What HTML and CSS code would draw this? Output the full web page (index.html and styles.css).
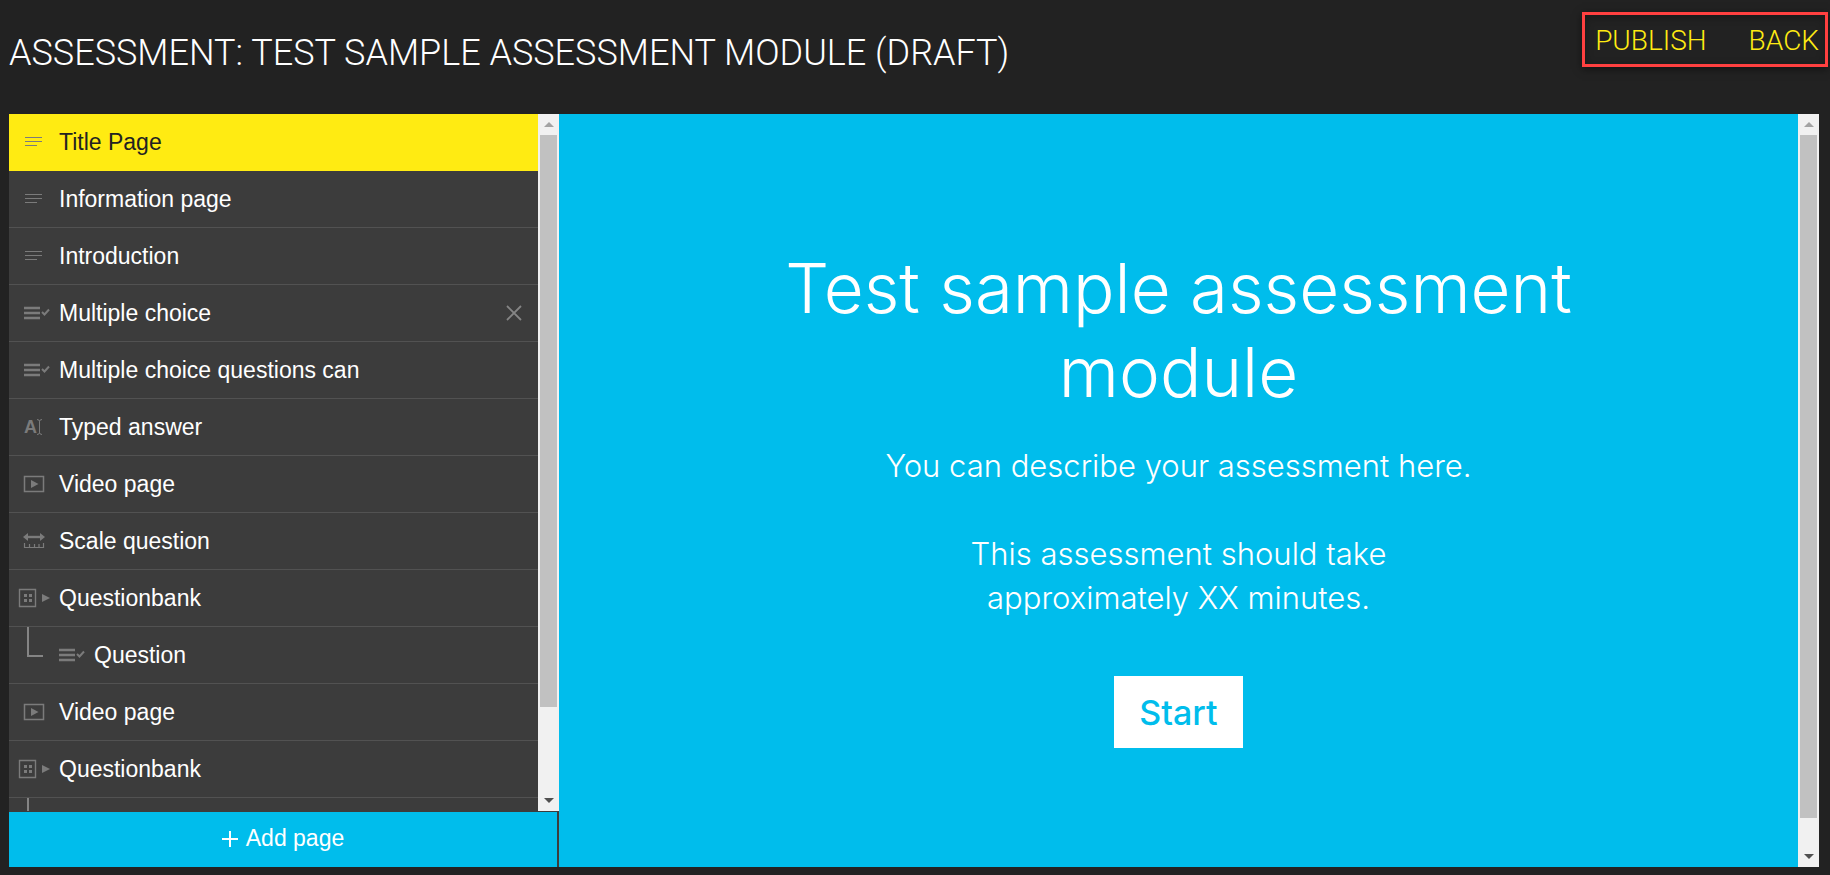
FILE: index.html
```html
<!DOCTYPE html>
<html lang="en">
<head>
    <meta charset="UTF-8">
    <meta name="viewport" content="width=device-width, initial-scale=1.0">
    <title>Assessment: Test sample assessment module</title>
    <link rel="stylesheet" href="styles.css">
</head>
<body>
    <!-- Shared icons -->
    <svg class="icon-defs" aria-hidden="true">
        <symbol id="icon-text" viewBox="0 0 36 24">
            <path d="M9 7.5h17M9 11.5h17M9 15.5h12" stroke="currentColor" stroke-width="1.2" fill="none"/>
        </symbol>
        <symbol id="icon-choice" viewBox="0 0 36 24">
            <path d="M8 7h16M8 12h16M8 17h16" stroke="currentColor" stroke-width="2.5" fill="none"/>
            <path d="M26 11l2.5 2.5 4.5-5" stroke="currentColor" stroke-width="2" fill="none"/>
        </symbol>
        <symbol id="icon-typed" viewBox="0 0 36 24">
            <text x="8" y="18" class="icon-letter">A</text>
            <path d="M21 4.5q2.500 0 2.500 2v11q0 2-2.500 2M26 4.500q-2.500 0-2.500 2v11q0 2 2.500 2" stroke="currentColor" fill="none"/>
        </symbol>
        <symbol id="icon-video" viewBox="0 0 36 24">
            <path d="M8.500 4.500h19v15h-19z" stroke="currentColor" stroke-width="1.500" fill="none"/>
            <path d="M15 8l7.500 4-7.500 4z" fill="currentColor"/>
        </symbol>
        <symbol id="icon-scale" viewBox="0 0 36 24">
            <path d="M11 8h14" stroke="currentColor" stroke-width="2.400" fill="none"/>
            <path d="M7 8l5-4v8zM29 8l-5-4v8z" fill="currentColor"/>
            <path d="M8.500 14v4.500h19V14M13.500 18v-3M18.500 18v-3M23 18v-3" stroke="currentColor" stroke-width="1.200" fill="none"/>
        </symbol>
        <symbol id="icon-bank" viewBox="0 0 36 24">
            <path d="M3.500 3.500h16v17h-16z" stroke="currentColor" stroke-width="1.400" fill="none"/>
            <path d="M8 8h3v3H8zM13 8h3v3h-3zM8 13h3v3H8zM13 13h3v3h-3z" fill="currentColor"/>
            <path d="M26 8l8 4-8 4z" fill="currentColor"/>
        </symbol>
    </svg>

    <header class="header">
        <h1 class="title">ASSESSMENT: TEST SAMPLE ASSESSMENT MODULE (DRAFT)</h1>
        <nav class="actions">
            <a href="#publish">PUBLISH</a>
            <a href="#back">BACK</a>
        </nav>
    </header>

    <main class="editor">
        <aside class="sidebar">
            <div class="list-wrap">
                <ul class="page-list">
                    <li class="page active"><button type="button" class="page-link"><svg class="icon"><use href="#icon-text"/></svg>Title Page</button></li>
                    <li class="page"><button type="button" class="page-link"><svg class="icon"><use href="#icon-text"/></svg>Information page</button></li>
                    <li class="page"><button type="button" class="page-link"><svg class="icon"><use href="#icon-text"/></svg>Introduction</button></li>
                    <li class="page">
                        <button type="button" class="page-link"><svg class="icon"><use href="#icon-choice"/></svg>Multiple choice</button>
                        <button type="button" class="remove" aria-label="Remove page">
                            <svg width="16" height="16" viewBox="0 0 16 16"><path d="M1 1l14 14M15 1L1 15" stroke="currentColor" stroke-width="1.800" fill="none"/></svg>
                        </button>
                    </li>
                    <li class="page"><button type="button" class="page-link"><svg class="icon"><use href="#icon-choice"/></svg>Multiple choice questions can</button></li>
                    <li class="page"><button type="button" class="page-link"><svg class="icon"><use href="#icon-typed"/></svg>Typed answer</button></li>
                    <li class="page"><button type="button" class="page-link"><svg class="icon"><use href="#icon-video"/></svg>Video page</button></li>
                    <li class="page"><button type="button" class="page-link"><svg class="icon"><use href="#icon-scale"/></svg>Scale question</button></li>
                    <li class="page"><button type="button" class="page-link"><svg class="icon"><use href="#icon-bank"/></svg>Questionbank</button></li>
                    <li class="page child"><span class="branch"></span><button type="button" class="page-link"><svg class="icon"><use href="#icon-choice"/></svg>Question</button></li>
                    <li class="page"><button type="button" class="page-link"><svg class="icon"><use href="#icon-video"/></svg>Video page</button></li>
                    <li class="page"><button type="button" class="page-link"><svg class="icon"><use href="#icon-bank"/></svg>Questionbank</button></li>
                    <li class="page child"><span class="branch"></span></li>
                </ul>
                <div class="scrollbar">
                    <span class="arrow up"></span>
                    <div class="track"><div class="thumb thumb-list"></div></div>
                    <span class="arrow down"></span>
                </div>
            </div>
            <button type="button" class="add-page">
                <svg width="16" height="16" viewBox="0 0 16 16"><path d="M8 0v16M0 8h16" stroke="currentColor" stroke-width="2" fill="none"/></svg>
                Add page
            </button>
        </aside>

        <section class="preview">
            <div class="preview-content">
                <h2>Test sample assessment module</h2>
                <p>You can describe your assessment here.</p>
                <p>This assessment should take approximately XX minutes.</p>
                <button type="button" class="start">Start</button>
            </div>
            <div class="scrollbar">
                <span class="arrow up"></span>
                <div class="track"><div class="thumb thumb-preview"></div></div>
                <span class="arrow down"></span>
            </div>
        </section>
    </main>
</body>
</html>
```
FILE: styles.css
```css
* {
    box-sizing: border-box;
}

body {
    margin: 0;
    height: 100vh;
    display: flex;
    flex-direction: column;
    background-color: #222;
    color: #fff;
    font-family: "Liberation Sans", Arial, sans-serif;
}

h1, h2, p, ul {
    margin: 0;
    padding: 0;
}

button {
    border: none;
    background: none;
    padding: 0;
    color: inherit;
    font-family: inherit;
    cursor: pointer;
}

.icon-defs {
    display: none;
}

/* Header */
.header {
    display: flex;
    justify-content: space-between;
    align-items: flex-start;
    height: 114px;
    padding: 12px 2px 0 9px;
}

.title {
    padding-top: 20px;
    font-family: Roboto, sans-serif;
    font-size: 36px;
    font-weight: 300;
    line-height: 42px;
}

.actions {
    display: flex;
    gap: 42px;
    padding: 9px 6px 7px 10px;
    border: 3px solid #ff4040;
    box-shadow: 0 2px 8px rgba(0, 0, 0, 0.5), inset 0 2px 8px rgba(0, 0, 0, 0.3);
}

.actions a {
    color: #ffeb12;
    font-family: Roboto, sans-serif;
    font-size: 28px;
    font-weight: 300;
    line-height: 33px;
    text-decoration: none;
}

/* Editor */
.editor {
    flex: 1;
    display: flex;
    min-height: 0;
    margin: 0 11px 8px 9px;
}

.sidebar {
    flex: 0 0 550px;
    display: flex;
    flex-direction: column;
    background-color: #3c3c3c;
}

.list-wrap {
    flex: 1;
    display: flex;
    min-height: 0;
    margin-bottom: 1px;
}

.page-list {
    flex: 1;
    overflow: hidden;
    list-style: none;
}

.page {
    display: flex;
    align-items: center;
    height: 57px;
    padding: 0 16px 0 7px;
    border-bottom: 1px solid #525252;
}

.page.active {
    background-color: #ffeb12;
    border-color: #ffeb12;
    color: #222;
}

.page-link {
    flex: 1;
    display: flex;
    align-items: center;
    gap: 7px;
    font-size: 23px;
    line-height: 26px;
    text-align: left;
}

.page.child {
    padding-left: 18px;
    gap: 8px;
}

.branch {
    align-self: flex-start;
    width: 16px;
    height: 30px;
    border-left: 2px solid #858585;
    border-bottom: 2px solid #858585;
}

.icon {
    width: 36px;
    height: 24px;
    color: #7b7b7b;
}

.icon-letter {
    font: bold 18px "Liberation Sans", Arial, sans-serif;
    fill: currentColor;
}

.remove {
    display: flex;
    color: #858585;
}

.add-page {
    display: flex;
    justify-content: center;
    align-items: center;
    gap: 8px;
    height: 55px;
    margin-right: 2px;
    padding-bottom: 2px;
    background-color: #00bdec;
    font-size: 23px;
}

/* Scrollbars */
.scrollbar {
    flex: 0 0 21px;
    display: flex;
    flex-direction: column;
    align-items: center;
    background-color: #f1f1f1;
}

.track {
    flex: 1;
    width: 17px;
}

.thumb {
    background-color: #c1c1c1;
}

.thumb-list {
    height: 87.3%;
}

.thumb-preview {
    height: 96%;
}

.arrow {
    display: flex;
    justify-content: center;
    align-items: center;
    height: 21px;
}

.arrow::before {
    content: "";
    border: 5px solid transparent;
}

.up::before {
    border-top: none;
    border-bottom-color: #a3a3a3;
}

.down::before {
    border-bottom: none;
    border-top-color: #505050;
}

/* Preview */
.preview {
    flex: 1;
    display: flex;
    background-color: #00bdec;
    font-family: Inter, sans-serif;
}

.preview-content {
    flex: 1;
    display: flex;
    flex-direction: column;
    align-items: center;
    padding-top: 132px;
    text-align: center;
}

.preview h2 {
    max-width: 860px;
    margin-bottom: 30px;
    font-size: 69px;
    font-weight: 300;
    line-height: 84px;
}

.preview p {
    max-width: 620px;
    margin-bottom: 44px;
    font-size: 31px;
    font-weight: 300;
    line-height: 44px;
}

.start {
    height: 72px;
    margin-top: 12px;
    padding: 0 25px;
    background-color: #fff;
    color: #00bdec;
    font-size: 34px;
    font-weight: 500;
}
```
